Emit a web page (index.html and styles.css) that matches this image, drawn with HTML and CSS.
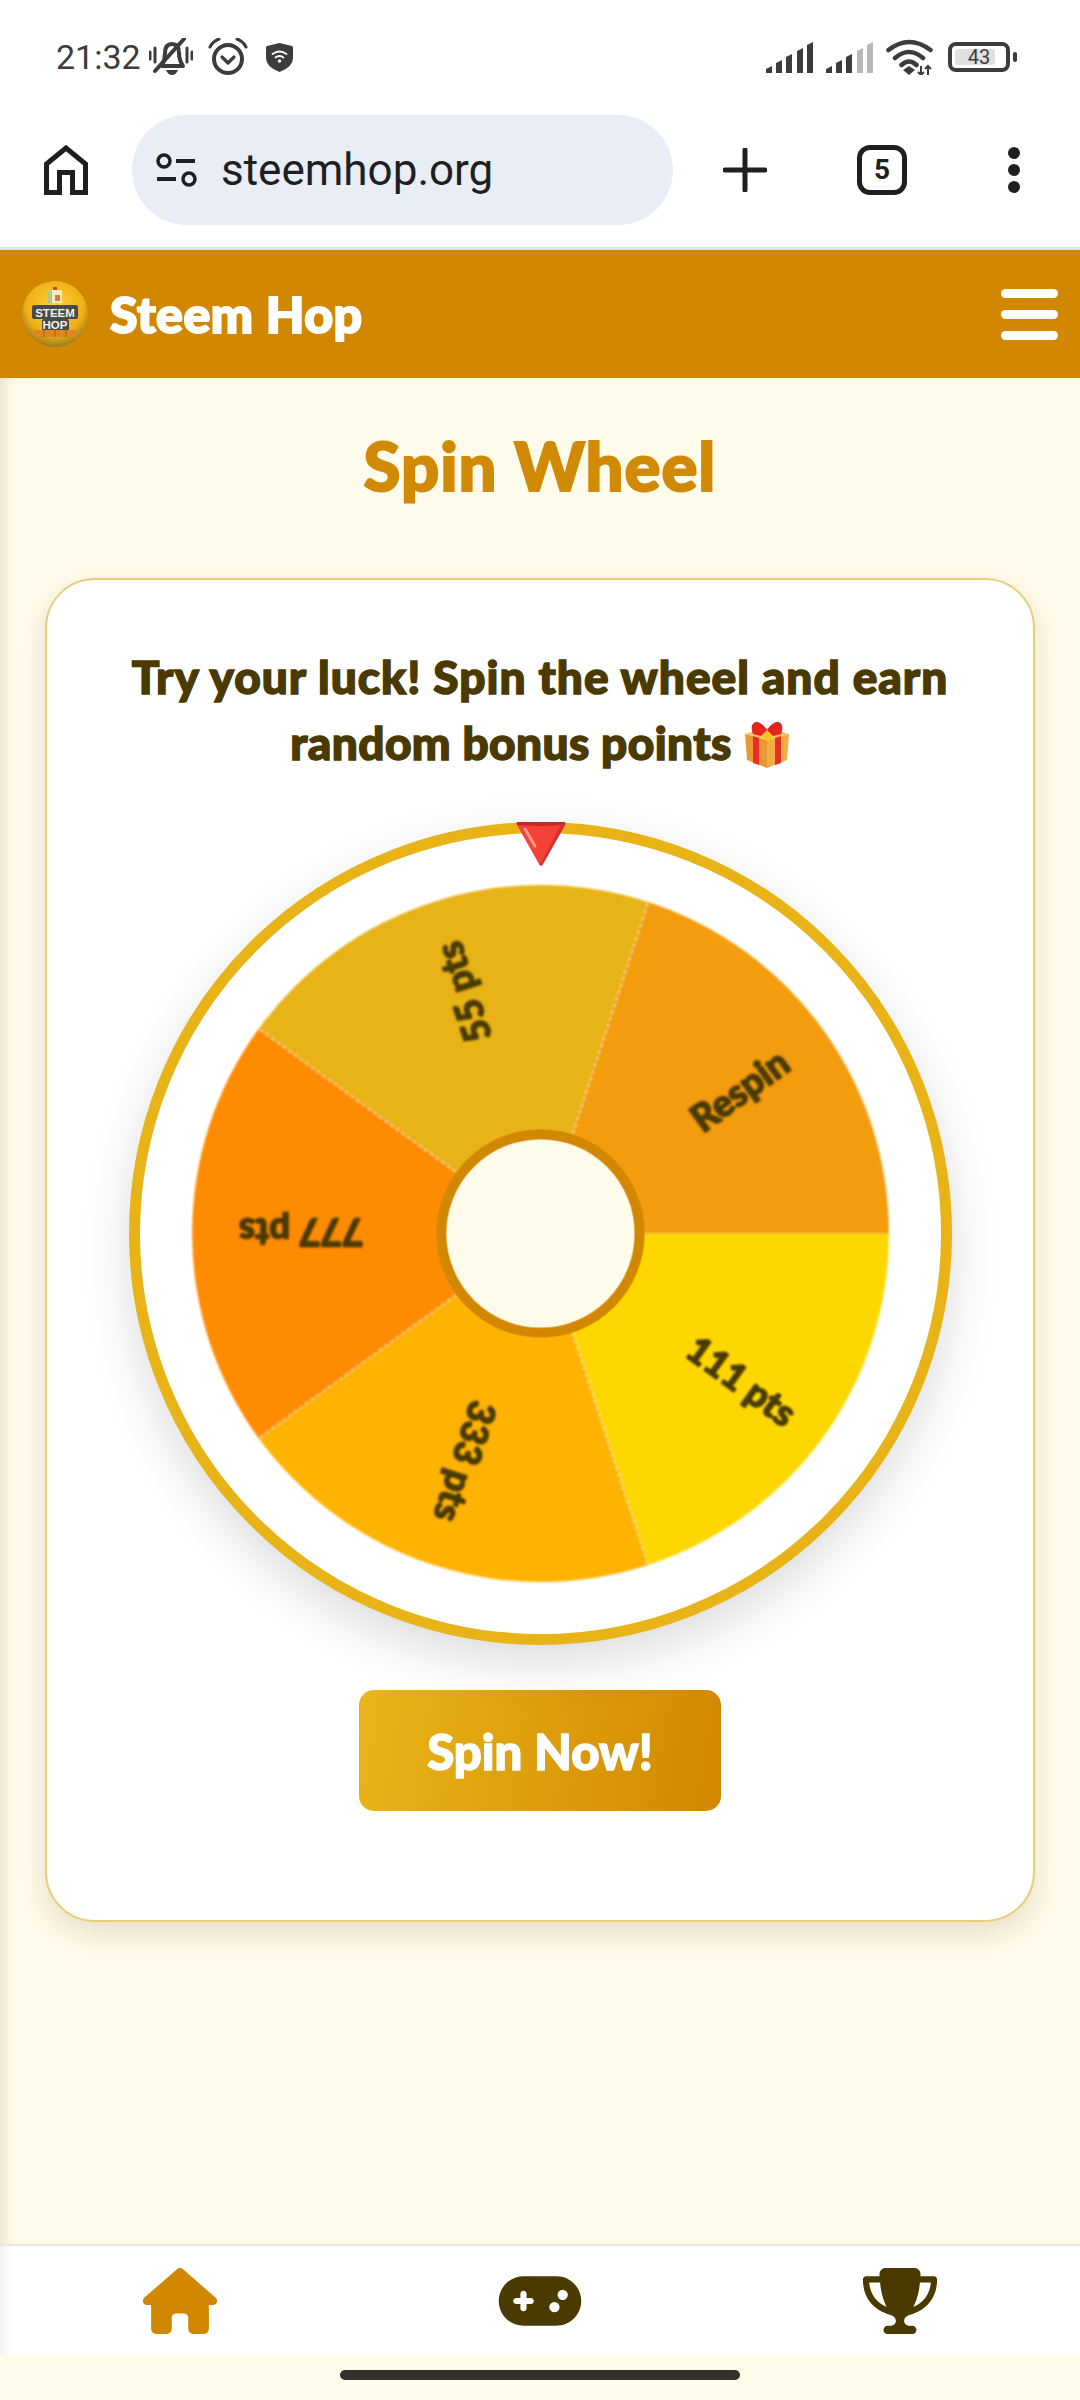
FILE: index.html
```html
<!DOCTYPE html>
<html lang="en">
<head>
    <meta charset="UTF-8">
    <meta name="viewport" content="width=device-width, initial-scale=1.0">
    <title>Steem Hop - Spin Wheel</title>
    <link rel="stylesheet" href="styles.css">
</head>
<body>
    <!-- phone status bar -->
    <div class="status-bar">
        <div class="status-left">
            <span class="clock">21:32</span>
            <svg class="ic-bell" viewBox="0 0 44 38"><path d="M13 28 Q16 22 16 15 Q16 6 23 6 Q30 6 30 15 Q30 22 34 28 Z" fill="none" stroke="#3c3c3c" stroke-width="4" stroke-linejoin="round"/><path d="M17 32 H29 Q27 37 23 37 Q19 37 17 32Z" fill="#3c3c3c"/><path d="M6 33 L35 1" stroke="#3c3c3c" stroke-width="4" stroke-linecap="round"/><path d="M1 14 V21 M6 10 V24 M38 10 V24 M43 14 V21" stroke="#3c3c3c" stroke-width="3" stroke-linecap="round"/></svg>
            <svg class="ic-alarm" viewBox="0 0 40 38"><circle cx="20" cy="21" r="14" fill="none" stroke="#3c3c3c" stroke-width="4"/><path d="M14 19 L20 25 L26 19" fill="none" stroke="#3c3c3c" stroke-width="3.2" stroke-linecap="round" stroke-linejoin="round"/><path d="M2 9 Q5 3 11 1 M38 9 Q35 3 29 1" fill="none" stroke="#3c3c3c" stroke-width="3" stroke-linecap="round"/></svg>
            <svg class="ic-shield" viewBox="0 0 27 29"><path d="M13.500 0 L26 3 Q27 3.500 27 5 V15 Q27 24 13.500 29 Q0 24 0 15 V5 Q0 3.500 1 3 Z" fill="#3c3c3c"/><path d="M6.500 11 Q13.500 6 20.500 11 M9.500 14.500 Q13.500 11.500 17.500 14.500" fill="none" stroke="#fff" stroke-width="1.800" stroke-linecap="round"/><circle cx="13.500" cy="18" r="1.700" fill="#fff"/></svg>
        </div>
        <div class="status-right">
            <svg class="ic-signal" viewBox="0 0 47 31"><path d="M0 31 V27 L6 24 V31Z M10 31 V21 L16 18 V31Z M20 31 V15 L26 12 V31Z M31 31 V9 L37 6 V31Z M41 31 V3 L47 0 V31Z" fill="#3c3c3c"/></svg>
            <svg class="ic-signal" viewBox="0 0 47 31"><path d="M0 31 V27 L6 24 V31Z M10 31 V21 L16 18 V31Z M20 31 V15 L26 12 V31Z" fill="#3c3c3c"/><path d="M31 31 V9 L37 6 V31Z M41 31 V3 L47 0 V31Z" fill="#b8b8b8"/></svg>
            <svg class="ic-wifi" viewBox="0 0 47 36"><path d="M2.500 11 Q23 -5 44.500 11 M9 19 Q23 7 37 19 M15.500 26 Q23 19 30.500 26" fill="none" stroke="#3c3c3c" stroke-width="4.500" stroke-linecap="round"/><path d="M17 31 L23 27 L29 31 L23 36Z" fill="#3c3c3c"/><path d="M35 27 V36 M42 27 V36 M32 33 L35 36 L38 33 M39 30 L42 27 L45 30" fill="none" stroke="#3c3c3c" stroke-width="2"/></svg>
            <div class="battery"><div class="battery-body"><div class="battery-fill"></div><span>43</span></div><div class="battery-nub"></div></div>
        </div>
    </div>

    <!-- browser toolbar -->
    <div class="toolbar">
        <svg class="ic-home" viewBox="0 0 44 50"><path d="M2.500 47.500 V19 L22 3 L41.500 19 V47.500 H28.500 V27.500 H15.500 V47.500 Z" fill="none" stroke="#1f1f1f" stroke-width="5"/></svg>
        <div class="url-pill">
            <svg class="ic-tune" viewBox="0 0 42 34"><circle cx="9" cy="8" r="6" fill="none" stroke="#1f1f1f" stroke-width="3.500"/><circle cx="34" cy="26" r="6" fill="none" stroke="#1f1f1f" stroke-width="3.500"/><path d="M21 8 H40 M2 26 H21" stroke="#1f1f1f" stroke-width="4"/></svg>
            <span class="url-text">steemhop.org</span>
        </div>
        <svg class="ic-plus" viewBox="0 0 44 44"><path d="M22 2 V42 M2 22 H42" stroke="#1f1f1f" stroke-width="5" stroke-linecap="round"/></svg>
        <div class="tab-count">5</div>
        <div class="dots"><i></i><i></i><i></i></div>
    </div>

    <!-- site header -->
    <header class="site-header">
        <svg class="logo" viewBox="0 0 66 66">
            <defs>
                <radialGradient id="logoBall" cx="50%" cy="38%" r="62%">
                    <stop offset="0" stop-color="#ffd23a"/>
                    <stop offset=".7" stop-color="#eeb015"/>
                    <stop offset="1" stop-color="#9a7a20"/>
                </radialGradient>
            </defs>
            <circle cx="33" cy="33" r="33" fill="url(#logoBall)"/>
            <rect x="26" y="9" width="14" height="13" fill="#f1ecc8"/>
            <rect x="26" y="9" width="4" height="13" fill="#b8c48a"/>
            <rect x="31" y="6" width="4" height="3" fill="#d8402a"/>
            <rect x="33" y="14" width="5" height="6" fill="#e8762a"/>
            <rect x="10" y="24" width="46" height="14" rx="2" fill="#4a4a48"/>
            <rect x="20" y="38" width="27" height="12" rx="2" fill="#4a4a48"/>
            <text x="33" y="36" class="logo-text" text-anchor="middle">STEEM</text>
            <text x="33" y="48" class="logo-text" text-anchor="middle">HOP</text>
            <rect x="12" y="49" width="42" height="7" rx="1" fill="#e0851c"/>
            <path d="M22 49 V56 M33 49 V56 M44 49 V56" stroke="#a85c10" stroke-width="1"/>
        </svg>
        <span class="brand">Steem Hop</span>
        <div class="burger"><i></i><i></i><i></i></div>
    </header>

    <main class="page">
        <h1 class="page-title">Spin Wheel</h1>
        <section class="card">
            <p class="intro">Try your luck! Spin the wheel and earn<br><span class="intro-tight">random bonus points</span> <svg class="gift" viewBox="0 0 46 48"><path d="M1 14 L23 20 V48 L3 40 Z" fill="#e59a32"/><path d="M45 14 L23 20 V48 L43 40 Z" fill="#f2ae45"/><path d="M1 14 L23 8 L45 14 L23 20Z" fill="#f5c15c"/><path d="M9 16 L15 18 V45 L9 43Z M31 18 L37 16 V43 L31 45Z" fill="#ea2e26"/><path d="M23 10 C14 -4 4 2 9 14 L17 16Z M23 10 C32 -4 42 2 37 14 L29 16Z" fill="#e5241f"/><path d="M23 12 L29 16 L23 21 L17 16Z" fill="#ffc61a"/></svg></p>
            <div class="wheel">
                <svg class="wheel-face" viewBox="-400 -400 800 800">
                    <defs>
                        <filter id="soft" x="-10%" y="-10%" width="120%" height="120%"><feGaussianBlur stdDeviation="1"/></filter>
                        <filter id="softer" x="-10%" y="-10%" width="120%" height="120%"><feGaussianBlur stdDeviation="1.300"/></filter>
                    </defs>
                    <g filter="url(#soft)">
                        <path d="M0 0 L348 0 A348 348 0 0 1 107.500 331Z" fill="#ffd700"/>
                        <path d="M0 0 L107.500 331 A348 348 0 0 1 -281.500 204.500Z" fill="#ffb300"/>
                        <path d="M0 0 L-281.500 204.500 A348 348 0 0 1 -281.500 -204.500Z" fill="#ff8c00"/>
                        <path d="M0 0 L-281.500 -204.500 A348 348 0 0 1 107.500 -331Z" fill="#e8b317"/>
                        <path d="M0 0 L107.500 -331 A348 348 0 0 1 348 0Z" fill="#f39c0e"/>
                        <path d="M0 0 L107.500 331 M0 0 L-281.500 204.500 M0 0 L-281.500 -204.500 M0 0 L107.500 -331" class="seam"/>
                    </g>
                    <g filter="url(#softer)">
                        <text class="slice-label" transform="rotate(36) translate(249 0)">111 pts</text>
                        <text class="slice-label" transform="rotate(108) translate(240 0)">333 pts</text>
                        <text class="slice-label" transform="rotate(180) translate(239 0)">777 pts</text>
                        <text class="slice-label" transform="rotate(252) translate(253 0)">55 pts</text>
                        <text class="slice-label" transform="rotate(324) translate(245 0)">Respin</text>
                    </g>
                    <circle r="99" fill="#fffbeb" stroke="#d18700" stroke-width="10"/>
                </svg>
                <!-- pointer sits over the rim -->
                <svg class="pointer" viewBox="0 0 50 44"><path d="M2 0 H48 Q50 0 49 3 L27 42 Q25 45 23 42 L1 3 Q0 0 2 0Z" fill="#f44336"/><path d="M2 3 Q25 5 48 3 L49 3 Q50 0 48 0 H2 Q0 0 1 3Z" fill="#c62828"/><path d="M9 7 L19 24" stroke="#ff9a8f" stroke-width="3" stroke-linecap="round"/><path d="M49 3 L27 42 Q25 45 23 42 Q25 41 26 39 L44 4Z" fill="#d32f2f"/></svg>
            </div>
            <button class="spin-btn">Spin Now!</button>
        </section>
    </main>

    <!-- site bottom nav -->
    <nav class="bottom-nav">
        <svg class="nav-icon active" viewBox="0 0 576 512"><path d="M575.800 255.500c0 18-15 32.100-32 32.100h-32l.7 160.200c0 2.700-.2 5.400-.5 8.100V472c0 22.100-17.900 40-40 40H456c-1.100 0-2.200 0-3.300-.1c-1.400 .1-2.800 .1-4.200 .1H416 392c-22.100 0-40-17.900-40-40V448 384c0-17.700-14.300-32-32-32H256c-17.700 0-32 14.300-32 32v64 24c0 22.100-17.900 40-40 40H160 128.100c-1.500 0-3-.1-4.500-.2c-1.200 .1-2.400 .2-3.600 .2H104c-22.100 0-40-17.900-40-40V360c0-.9 0-1.900 .1-2.800V287.600H32c-18 0-32-14-32-32.100c0-9 3-17 10-24L266.400 8c7-7 15-8 22-8s15 2 21 7L564.800 231.500c8 7 12 15 11 24z"/></svg>
        <svg class="nav-icon" viewBox="0 0 640 512"><path d="M192 64C86 64 0 150 0 256S86 448 192 448H448c106 0 192-86 192-192s-86-192-192-192H192zM496 168a40 40 0 1 1 0 80 40 40 0 1 1 0-80zM392 304a40 40 0 1 1 80 0 40 40 0 1 1 -80 0zM168 200c0-13.300 10.700-24 24-24s24 10.700 24 24v32h32c13.300 0 24 10.700 24 24s-10.700 24-24 24H216v32c0 13.300-10.700 24-24 24s-24-10.700-24-24V280H136c-13.300 0-24-10.700-24-24s10.700-24 24-24h32V200z"/></svg>
        <svg class="nav-icon" viewBox="0 0 576 512"><path d="M400 0H176c-26.500 0-48.100 21.800-47.100 48.200c.2 5.300 .4 10.600 .7 15.800H24C10.700 64 0 74.700 0 88c0 92.600 33.500 157 78.500 200.700c44.300 43.100 98.300 64.800 138.100 75.800c23.400 6.500 39.400 26 39.400 45.600c0 20.900-17 37.900-37.900 37.900H192c-17.700 0-32 14.300-32 32s14.300 32 32 32H384c17.700 0 32-14.300 32-32s-14.300-32-32-32H357.900C337 448 320 431 320 410.100c0-19.600 15.900-39.200 39.400-45.600c39.900-11 93.900-32.700 138.200-75.800C542.500 245 576 180.600 576 88c0-13.300-10.700-24-24-24H446.400c.3-5.200 .5-10.400 .7-15.800C448.100 21.800 426.500 0 400 0zM48.900 112h84.400c9.100 90.100 29.200 150.300 51.900 190.600c-24.900-11-50.800-26.500-73.200-48.300c-32-31.100-58-76-63-142.300zM464.100 254.300c-22.400 21.800-48.300 37.300-73.200 48.300c22.700-40.300 42.800-100.500 51.900-190.600h84.400c-5.100 66.300-31.100 111.200-63 142.300z"/></svg>
    </nav>

    <div class="gesture-area"><div class="gesture-bar"></div></div>
</body>
</html>
```

FILE: styles.css
```css
* {
    box-sizing: border-box;
}
html, body {
    margin: 0;
    height: 2400px;
}
body {
    display: flex;
    flex-direction: column;
    width: 1080px;
    overflow: hidden;
    background: #fffbeb;
    font-family: Lato, "Noto Sans", sans-serif;
}

/* status bar */
.status-bar {
    display: flex;
    align-items: center;
    justify-content: space-between;
    height: 114px;
    padding: 0 63px 0 56px;
    background: #fff;
    color: #3c3c3c;
}
.status-left, .status-right {
    display: flex;
    align-items: center;
}
.clock {
    font-family: Roboto, sans-serif;
    font-size: 34px;
}
.ic-bell {
    width: 44px;
    height: 38px;
    margin-left: 8px;
}
.ic-alarm {
    width: 40px;
    height: 38px;
    margin-left: 15px;
}
.ic-shield {
    width: 27px;
    height: 29px;
    margin-left: 18px;
}
.ic-signal {
    width: 47px;
    height: 31px;
    margin-right: 13px;
}
.ic-wifi {
    width: 47px;
    height: 36px;
    margin-right: 15px;
}
.battery {
    display: flex;
    align-items: center;
    gap: 3px;
}
.battery-body {
    position: relative;
    width: 62px;
    height: 30px;
    border: 4px solid #3c3c3c;
    border-radius: 8px;
    font-family: Roboto, sans-serif;
    font-size: 20px;
    line-height: 22px;
    text-align: center;
}
.battery-fill {
    position: absolute;
    left: 3px;
    top: 3px;
    bottom: 3px;
    width: 40px;
    border-radius: 3px;
    background: #e0e0e0;
}
.battery-body span {
    position: relative;
}
.battery-nub {
    width: 4px;
    height: 10px;
    border-radius: 2px;
    background: #3c3c3c;
}

/* browser toolbar */
.toolbar {
    display: flex;
    align-items: center;
    height: 136px;
    padding: 1px 0 22px 44px;
    border-bottom: 3px solid #dde5ea;
    background: #fff;
}
.ic-home {
    width: 44px;
    height: 50px;
}
.url-pill {
    display: flex;
    align-items: center;
    width: 541px;
    height: 110px;
    margin-left: 44px;
    padding-left: 23px;
    border-radius: 55px;
    background: #e8edf6;
}
.ic-tune {
    width: 42px;
    height: 34px;
}
.url-text {
    margin-left: 24px;
    font-family: Roboto, sans-serif;
    font-size: 44px;
    color: #1f1f1f;
}
.ic-plus {
    width: 44px;
    height: 44px;
    margin-left: 50px;
}
.tab-count {
    width: 50px;
    height: 50px;
    margin-left: 90px;
    border: 5px solid #1f1f1f;
    border-radius: 13px;
    font-family: Roboto, sans-serif;
    font-size: 28px;
    font-weight: 700;
    line-height: 40px;
    text-align: center;
    color: #1f1f1f;
}
.dots {
    display: flex;
    flex-direction: column;
    gap: 5px;
    margin-left: 101px;
}
.dots i {
    width: 12px;
    height: 12px;
    border-radius: 50%;
    background: #1f1f1f;
}

/* site header */
.site-header {
    display: flex;
    align-items: center;
    height: 128px;
    padding: 0 22px;
    background: #d18700;
}
.logo {
    width: 66px;
    height: 66px;
}
.logo-text {
    font-family: "Liberation Sans", sans-serif;
    font-size: 11.500px;
    font-weight: 700;
    fill: #f4f1e6;
}
.brand {
    margin-left: 22px;
    font-size: 50px;
    font-weight: 900;
    letter-spacing: .5px;
    color: #fff;
    -webkit-text-stroke: 2px #fff;
}
.burger {
    display: flex;
    flex-direction: column;
    gap: 12px;
    margin-left: auto;
}
.burger i {
    width: 57px;
    height: 9px;
    border-radius: 5px;
    background: #fff;
}

/* page */
.page {
    flex: 1;
    padding-top: 47px;
    box-shadow: inset 16px 0 14px -12px rgba(120, 100, 40, .18);
}
.page-title {
    margin: 0 0 73px;
    font-size: 67px;
    font-weight: 900;
    letter-spacing: 1px;
    line-height: 80px;
    text-align: center;
    color: #d18a05;
    -webkit-text-stroke: 2px #d18a05;
}
.card {
    display: flex;
    flex-direction: column;
    align-items: center;
    width: 990px;
    margin: 0 auto;
    padding: 64px 0 109px;
    border: 2px solid #e8cd7a;
    border-radius: 50px;
    background: #fff;
    box-shadow: 0 12px 30px rgba(120, 100, 40, .18);
}
.intro {
    margin: 0;
    font-size: 46px;
    font-weight: 900;
    letter-spacing: 1px;
    line-height: 66px;
    text-align: center;
    color: #4a3a00;
    -webkit-text-stroke: 1.500px #4a3a00;
}
.intro-tight {
    letter-spacing: .4px;
}
.gift {
    width: 46px;
    height: 48px;
    vertical-align: -8px;
}
.wheel {
    position: relative;
    width: 823px;
    height: 823px;
    margin-top: 46px;
    border: 11px solid #e8b317;
    border-radius: 50%;
    background: #fff;
    box-shadow: 0 18px 50px rgba(0, 0, 0, .14);
}
.wheel-face {
    display: block;
    width: 801px;
    height: 801px;
}
.seam {
    stroke: #fff;
    stroke-width: 2;
    stroke-dasharray: 3 4;
    opacity: .45;
}
.slice-label {
    font-size: 37px;
    font-weight: 900;
    fill: #4a3a00;
    stroke: #4a3a00;
    stroke-width: 1.500;
    stroke-linejoin: round;
    text-anchor: middle;
    dominant-baseline: central;
}
.pointer {
    position: absolute;
    left: 376px;
    top: -11px;
    width: 50px;
    height: 44px;
}
.spin-btn {
    width: 362px;
    height: 121px;
    margin-top: 45px;
    border: 0;
    border-radius: 15px;
    background: linear-gradient(100deg, #eab518, #d18700);
    font-family: inherit;
    font-size: 49px;
    font-weight: 900;
    color: #fff;
    -webkit-text-stroke: 1.500px #fff;
}

/* bottom nav */
.bottom-nav {
    display: flex;
    align-items: center;
    justify-content: space-around;
    height: 111px;
    border-top: 2px solid #e8e8e2;
    background: #fff;
    box-shadow: inset 16px 0 14px -12px rgba(0, 0, 0, .08);
}
.nav-icon {
    width: 84px;
    height: 66px;
    fill: #4a3a00;
}
.nav-icon.active {
    fill: #d18700;
}
.gesture-area {
    display: flex;
    justify-content: center;
    height: 45px;
    padding-top: 15px;
}
.gesture-bar {
    width: 400px;
    height: 10px;
    border-radius: 5px;
    background: #33312c;
}
```
